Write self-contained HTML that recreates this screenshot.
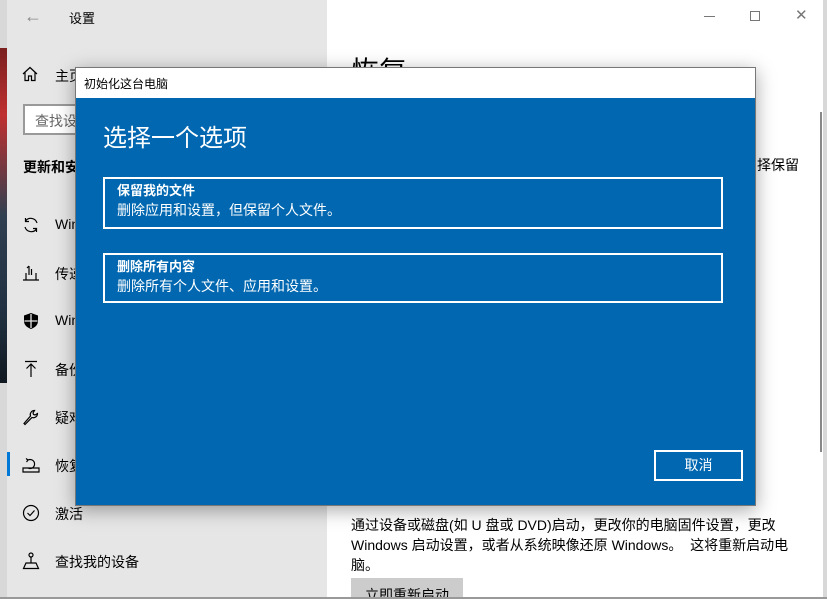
<!DOCTYPE html>
<html><head><meta charset="utf-8"><style>
*{margin:0;padding:0;box-sizing:border-box}
html,body{width:827px;height:599px;overflow:hidden}
body{position:relative;background:#d8d8d8;font-family:"Liberation Sans","Noto Sans CJK SC",sans-serif;}
.abs{position:absolute}
.side{left:7px;top:0;width:320px;height:597px;background:#e6e6e6}
.main{left:327px;top:0;width:496px;height:597px;background:#fff}
.it{position:absolute;left:55px;font-size:14px;color:#000;white-space:nowrap}
.ic{position:absolute;left:22px}
.dlg{left:75px;top:67px;width:681px;height:439px;background:#0067b0;border:1px solid #777;box-shadow:0 4px 18px rgba(0,0,0,.35)}
.opt{position:absolute;left:27px;width:620px;border:2px solid #fff;color:#fff;padding:5px 12px}
.opt b{display:block;font-size:13px;line-height:18px}
.opt span{display:block;font-size:14px;line-height:20px}
</style></head><body>
<div class="abs" style="left:0;top:48px;width:7px;height:335px;background:linear-gradient(#7a2020,#c03030 20%,#304050 50%,#203040 80%,#101820)"></div>
<div class="abs side"></div>
<div class="abs" style="left:7px;top:452px;width:3px;height:24px;background:#0078d7"></div>
<div class="abs" style="left:24px;top:6px;font-size:18px;color:#888">&#8592;</div>
<div class="abs" style="left:69px;top:8px;font-size:13px">设置</div>
<svg class="ic" style="top:66px" width="16" height="16" viewBox="0 0 16 16" fill="none" stroke="#000" stroke-width="1.2"><path d="M1 8L8 1.5 15 8M3 6.5V14.5H6.5V10H9.5V14.5H13V6.5"/></svg>
<div class="it" style="top:66px">主页</div>
<div class="abs" style="left:23px;top:104px;width:90px;height:31px;border:2px solid #999;background:#fff;font-size:14px;color:#666;padding:5px 10px;white-space:nowrap">查找设置</div>
<div class="abs" style="left:23px;top:157px;font-size:14px;font-weight:bold">更新和安全</div>
<svg class="ic" style="top:216px" width="18" height="18" viewBox="0 0 18 18" fill="none" stroke="#000" stroke-width="1.2"><path d="M15 7A6.5 6.5 0 0 0 3.5 5M3 11A6.5 6.5 0 0 0 14.5 13M3.5 2V5.5H7M14.5 16V12.5H11"/></svg>
<div class="it" style="top:216px">Windows</div>
<svg class="ic" style="top:264px" width="18" height="18" viewBox="0 0 18 18" fill="none" stroke="#000" stroke-width="1.2"><path d="M1 16H17M4 16V9M14 16V9M7 11V2M9.5 5V11M7 2L5 4"/></svg>
<div class="it" style="top:264px">传递优化</div>
<svg class="ic" style="top:312px" width="18" height="18" viewBox="0 0 18 18"><path d="M9 1L2 3.5V9C2 13 5 15.5 9 17 13 15.5 16 13 16 9V3.5Z" fill="#000"/><path d="M9 2V16M2.5 9H15.5" stroke="#e6e6e6" stroke-width="1.3"/></svg>
<div class="it" style="top:312px">Windows</div>
<svg class="ic" style="top:360px" width="18" height="18" viewBox="0 0 18 18" fill="none" stroke="#000" stroke-width="1.2"><path d="M3 1.5H15M9 17V4M4.5 8.5L9 4 13.5 8.5"/></svg>
<div class="it" style="top:360px">备份</div>
<svg class="ic" style="top:408px" width="18" height="18" viewBox="0 0 18 18" fill="none" stroke="#000" stroke-width="1.2"><path d="M2 15.5L3 16.5 10 9.5C12.5 10.5 15.5 8.5 15.5 5.5L13 7 11.5 6.5 11 5 12.5 2.5C9.5 2.5 7.5 5.5 8.5 8Z"/></svg>
<div class="it" style="top:408px">疑难解答</div>
<svg class="ic" style="top:456px" width="18" height="18" viewBox="0 0 18 18" fill="none" stroke="#000" stroke-width="1.2"><path d="M1 12H17V16H1ZM6 12A4.5 4.5 0 1 0 6 4M6 4L4 2.5M6 4L4.5 6"/></svg>
<div class="it" style="top:456px">恢复</div>
<svg class="ic" style="top:504px" width="18" height="18" viewBox="0 0 18 18" fill="none" stroke="#000" stroke-width="1.2"><circle cx="9" cy="9" r="7.5"/><path d="M5.5 9L8 11.5 12.5 6.5"/></svg>
<div class="it" style="top:504px">激活</div>
<svg class="ic" style="top:552px" width="18" height="18" viewBox="0 0 18 18" fill="none" stroke="#000" stroke-width="1.2"><circle cx="9" cy="3" r="2"/><path d="M9 5V11M1.5 16.5H16.5L14 11H4Z"/></svg>
<div class="it" style="top:552px">查找我的设备</div>

<div class="abs main"></div>
<div class="abs" style="left:820px;top:112px;width:2px;height:340px;background:#888"></div>
<div class="abs" style="left:704px;top:16px;width:11px;height:1px;background:#777"></div>
<div class="abs" style="left:750px;top:11px;width:10px;height:10px;border:1px solid #777"></div>
<div class="abs" style="left:795px;top:6px;font-size:15px;color:#777">&#10005;</div>
<div class="abs" style="left:351px;top:50px;font-size:28px">恢复</div>
<div class="abs" style="left:757px;top:155px;font-size:14px">择保留</div>
<div class="abs" style="left:351px;top:515px;font-size:14px;line-height:20px;width:450px">通过设备或磁盘(如 U 盘或 DVD)启动，更改你的电脑固件设置，更改 Windows 启动设置，或者从系统映像还原 Windows。&nbsp;&nbsp;这将重新启动电脑。</div>
<div class="abs" style="left:351px;top:578px;width:112px;height:19px;overflow:hidden;background:#ccc;font-size:14px;padding:7px 0 0 14px">立即重新启动</div>
<div class="abs" style="left:0;top:597px;width:827px;height:2px;background:#999"></div>

<div class="abs dlg">
<div class="abs" style="left:0;top:0;width:679px;height:30px;background:#fff;font-size:12px;padding:7px 8px">初始化这台电脑</div>
<div class="abs" style="left:27px;top:50px;font-size:24px;color:#fff">选择一个选项</div>
<div class="opt" style="top:109px;height:52px;padding-top:3px"><b>保留我的文件</b><span>删除应用和设置，但保留个人文件。</span></div>
<div class="opt" style="top:185px;height:50px;padding-top:3px"><b>删除所有内容</b><span>删除所有个人文件、应用和设置。</span></div>
<div class="abs" style="left:578px;top:382px;width:89px;height:31px;border:2px solid #fff;color:#fff;font-size:14px;text-align:center;line-height:27px">取消</div>
</div>
</body></html>
